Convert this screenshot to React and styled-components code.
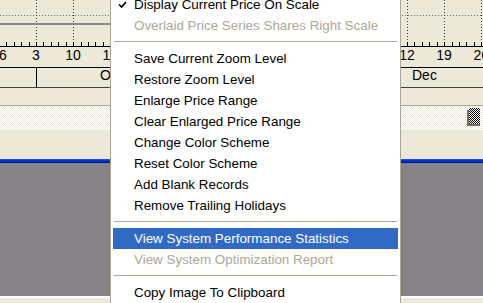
import React from "react";
import styled, { createGlobalStyle } from "styled-components";

const Global = createGlobalStyle`
  html, body { margin: 0; padding: 0; background: #ece9d8; overflow: hidden; }
  #root { width: 483px; height: 303px; }
`;

const Page = styled.div`
  position: relative;
  width: 483px;
  height: 303px;
  overflow: hidden;
  display: flex;
  flex-direction: column;
  background: #ece9d8;
  font-family: "Liberation Sans", Arial, sans-serif;
`;

const Axis = styled.svg`
  display: block;
  width: 483px;
  height: 88px;
  flex: none;
`;

const Gap = styled.div`
  height: ${(p) => p.$h}px;
  flex: none;
`;

const Track = styled.div`
  height: 22px;
  flex: none;
  border-top: 1px solid #aca899;
  background: repeating-conic-gradient(#ffffff 0 25%, #ece9d8 0 50%) 0 0 / 2px 2px;
  display: flex;
  justify-content: flex-end;
  align-items: flex-start;
  padding: 2px 3px 0 0;
  box-sizing: content-box;
`;

const Thumb = styled.div`
  width: 11px;
  height: 16px;
  background: repeating-conic-gradient(#000 0 25%, #fff 0 50%) 0 0 / 2px 2px;
  box-shadow: 0 2px 0 #716f64, -2px 2px 0 #716f64;
`;

const BlueBar = styled.div`
  height: 4px;
  flex: none;
  background: linear-gradient(#1c4fe0 0 1px, #0032d6 1px 3px, #00118c 3px 4px);
`;

const Pane = styled.div`
  height: 133px;
  flex: none;
  background: #858386;
  border-bottom: 2px solid #ffffff;
`;

const Menu = styled.div`
  position: absolute;
  left: 110px;
  top: -9px;
  width: 291px;
  box-sizing: border-box;
  background: #ffffff;
  border: 1px solid #aca899;
  padding: 2px;
  display: flex;
  flex-direction: column;
  font-family: "Liberation Sans", Arial, sans-serif;
  font-size: 13.4px;
`;

const Item = styled.div`
  position: relative;
  height: 21px;
  line-height: 21px;
  padding-left: 21px;
  white-space: nowrap;
  color: ${(p) => (p.$disabled ? "#aca899" : p.$active ? "#ffffff" : "#000000")};
  background: ${(p) => (p.$active ? "#316ac5" : "transparent")};
`;

const Check = styled.svg`
  position: absolute;
  left: 5px;
  top: 7px;
  width: 9px;
  height: 8px;
`;

const Separator = styled.div`
  height: 1px;
  margin: 5px 1px 6px;
  background: #aca899;
`;

const step = 37.1;
const weeks = ["26", "3", "10", "17", "", "", "", "", "", "", "", "12", "19", "26"];

function TimeAxis() {
  const majors = weeks.map((_, i) => 36 + step * (i - 1));
  const ticks = [];
  for (let x = -1.1; x < 490; x += step / 5) ticks.push(x);
  return (
    <Axis viewBox="0 0 483 88">
      <line x1="0" y1="15.5" x2="483" y2="15.5" stroke="#6b6b6b" strokeDasharray="1 2" />
      {majors.map((x, i) => (
        <line key={"v" + i} x1={Math.round(x) + 0.5} y1="0" x2={Math.round(x) + 0.5} y2="46" stroke="#3a3a3a" strokeDasharray="1 2" />
      ))}
      <line x1="0" y1="24" x2="110" y2="24" stroke="#8a8a8a" strokeWidth="2" />
      <line x1="0" y1="46.5" x2="483" y2="46.5" stroke="#000" />
      {ticks.map((x, i) => (
        <line key={"t" + i} x1={Math.round(x) + 0.5} y1="42" x2={Math.round(x) + 0.5} y2="46" stroke="#000" />
      ))}
      {weeks.map((w, i) =>
        w ? (
          <text key={"l" + i} x={majors[i]} y="60" textAnchor="middle" fontFamily="Liberation Sans, Arial, sans-serif" fontSize="14" fill="#000">
            {w}
          </text>
        ) : null
      )}
      <line x1="0" y1="67.5" x2="483" y2="67.5" stroke="#000" />
      <line x1="36.5" y1="67" x2="36.5" y2="87" stroke="#000" />
      <text x="100" y="80" fontFamily="Liberation Sans, Arial, sans-serif" fontSize="14" fill="#000">Oct</text>
      <text x="412" y="80" fontFamily="Liberation Sans, Arial, sans-serif" fontSize="14" fill="#000">Dec</text>
      <line x1="0" y1="87.5" x2="483" y2="87.5" stroke="#404040" />
    </Axis>
  );
}

const items = [
  { t: "Display Current Price On Scale", checked: true },
  { t: "Overlaid Price Series Shares Right Scale", disabled: true },
  "sep",
  { t: "Save Current Zoom Level" },
  { t: "Restore Zoom Level" },
  { t: "Enlarge Price Range" },
  { t: "Clear Enlarged Price Range" },
  { t: "Change Color Scheme" },
  { t: "Reset Color Scheme" },
  { t: "Add Blank Records" },
  { t: "Remove Trailing Holidays" },
  "sep",
  { t: "View System Performance Statistics", active: true },
  { t: "View System Optimization Report", disabled: true },
  "sep",
  { t: "Copy Image To Clipboard" },
];

export default function App() {
  return (
    <>
      <Global />
      <Page>
        <TimeAxis />
        <Gap $h={17} />
        <Track>
          <Thumb />
        </Track>
        <Gap $h={29} />
        <BlueBar />
        <Pane />
        <Menu>
          {items.map((it, i) =>
            it === "sep" ? (
              <Separator key={i} />
            ) : (
              <Item key={i} $disabled={it.disabled} $active={it.active}>
                {it.checked && (
                  <Check viewBox="0 0 9 8">
                    <path d="M1 3.5 L3.5 6 L8 1" fill="none" stroke="#000" strokeWidth="1.7" />
                  </Check>
                )}
                {it.t}
              </Item>
            )
          )}
        </Menu>
      </Page>
    </>
  );
}
